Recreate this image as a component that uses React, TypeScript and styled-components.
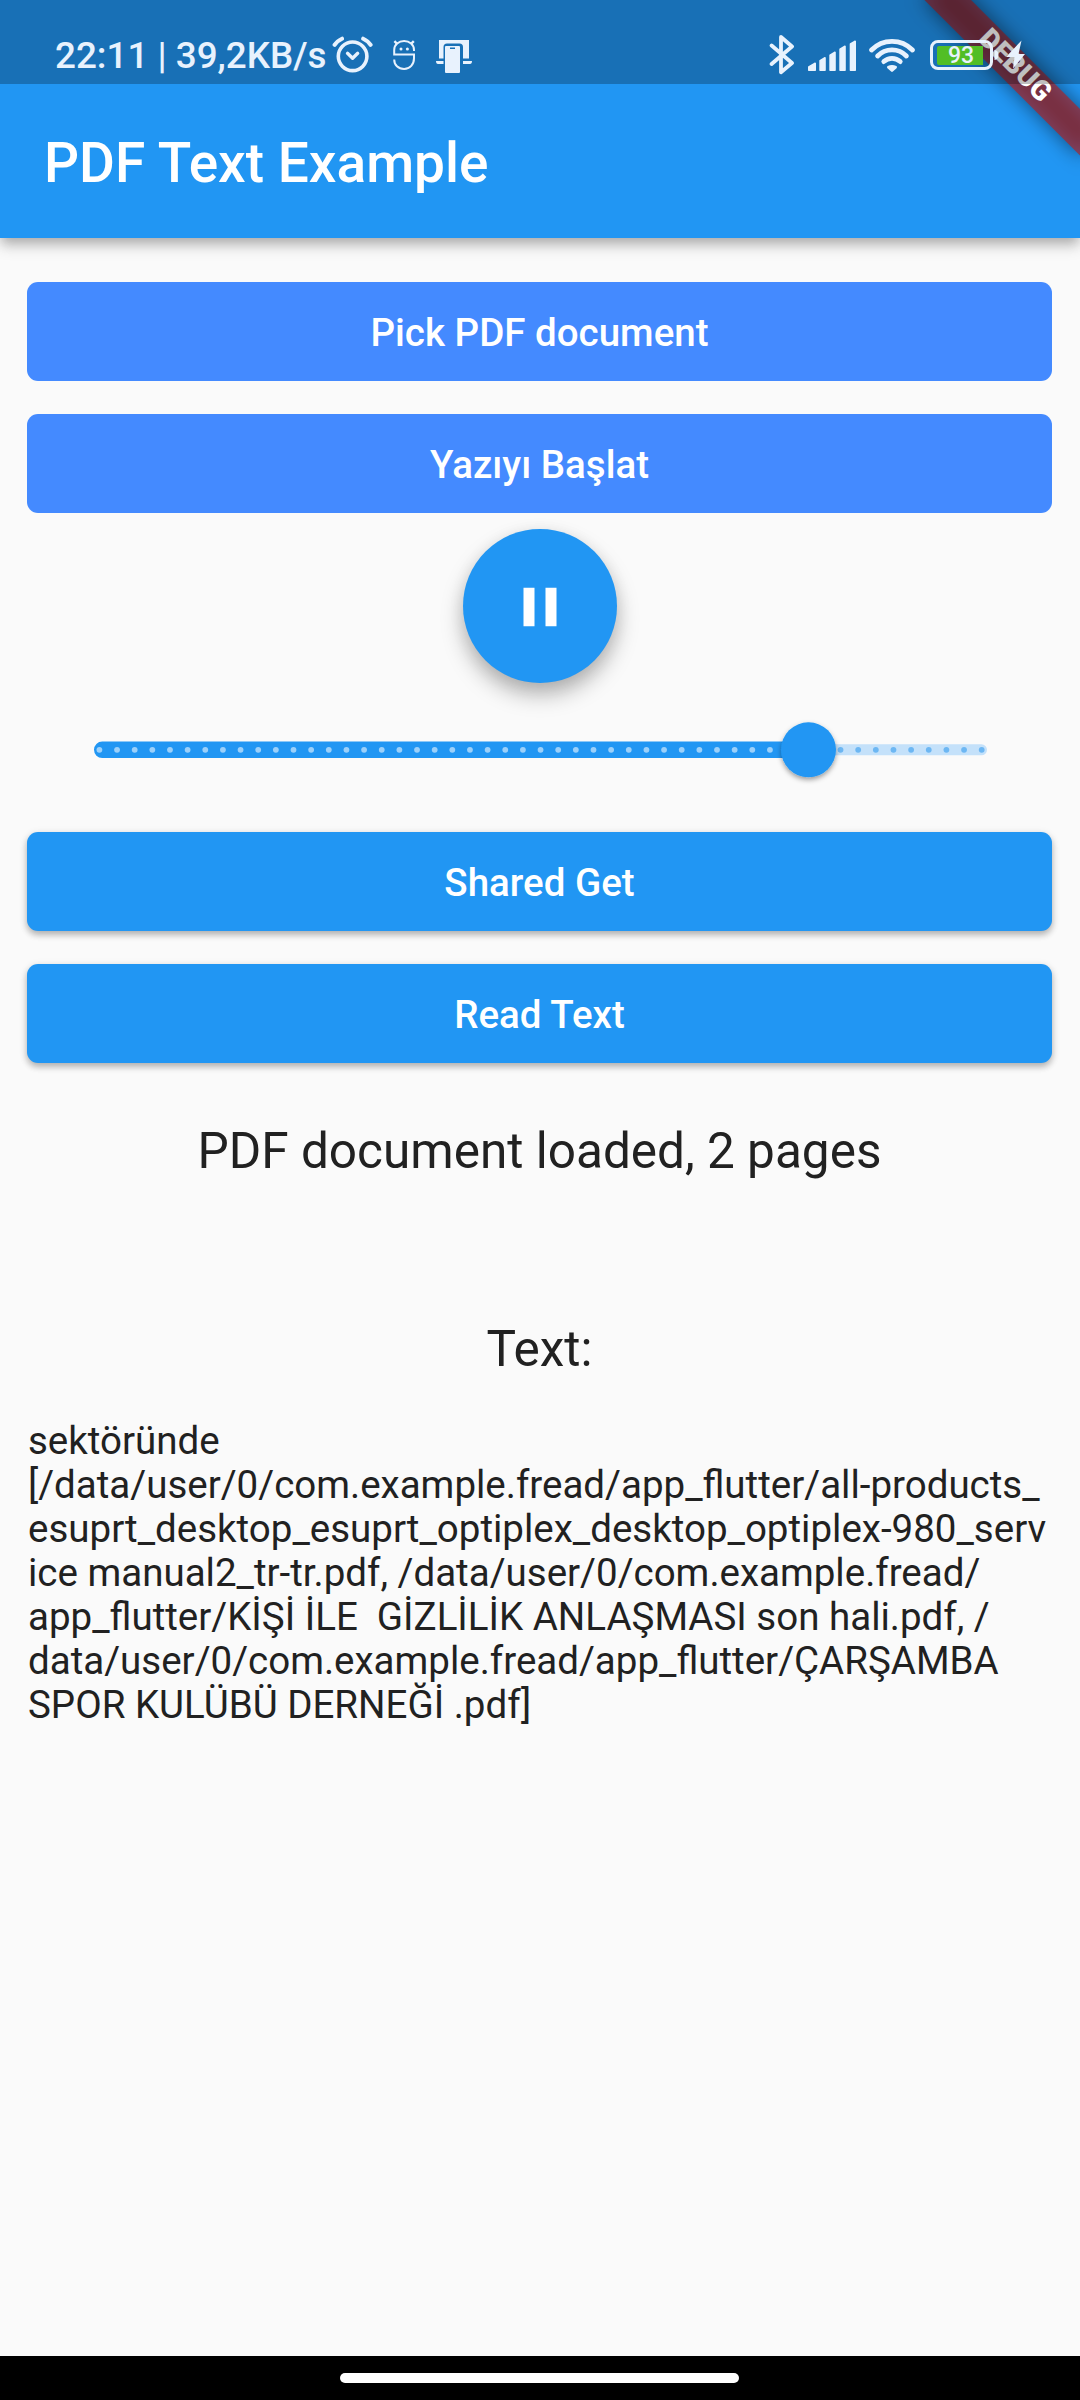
import React from "react";
import styled, { createGlobalStyle } from "styled-components";

const GlobalStyle = createGlobalStyle`
  html, body { margin: 0; padding: 0; background: #fafafa; }
  * { box-sizing: border-box; }
`;

const Screen = styled.div`
  position: relative;
  display: flex;
  flex-direction: column;
  width: 1080px;
  height: 2400px;
  overflow: hidden;
  background: #fafafa;
  color: #212121;
  font-family: Roboto, "Noto Sans", sans-serif;
`;

const AppBar = styled.header`
  display: flex;
  align-items: center;
  flex: none;
  height: 238px;
  padding: 87px 44px 0;
  background: #2196f3;
  box-shadow: 0 6px 11px -2px rgba(0, 0, 0, 0.22), 0 9px 14px rgba(0, 0, 0, 0.14);
`;

const Title = styled.h1`
  margin: 0;
  font-size: 55px;
  font-weight: 500;
  line-height: 66px;
  color: #fff;
  white-space: nowrap;
`;

const BannerAnchor = styled.div`
  position: absolute;
  top: 0;
  right: 0;
  width: 0;
  height: 0;
  transform: rotate(45deg);
`;

const BannerShadow = styled.div`
  position: absolute;
  left: -110px;
  top: 77px;
  width: 220px;
  height: 33px;
  background: rgba(0, 0, 0, 0.5);
  filter: blur(10px);
`;

const BannerRibbon = styled.div`
  position: absolute;
  left: -110px;
  top: 77px;
  display: flex;
  align-items: center;
  justify-content: center;
  width: 220px;
  height: 33px;
  padding: 0 0 3px 1px;
  background: rgba(183, 28, 28, 0.627);
  color: #fff;
  font-size: 28px;
  font-weight: 900;
  line-height: 28px;
`;

const StatusBar = styled.div`
  position: absolute;
  top: 0;
  left: 0;
  display: flex;
  justify-content: space-between;
  width: 1080px;
  height: 84px;
  padding: 34px 53px 0 55px;
  background: rgba(0, 0, 0, 0.25);
  color: #e8f2fd;
`;

const StatusGroup = styled.div`
  display: flex;
  align-items: flex-start;
`;

const StatusText = styled.span`
  width: 276px;
  font-size: 36.8px;
  font-weight: 500;
  line-height: 44px;
  white-space: pre;
`;

const Glyph = styled.svg<{ $gap?: number }>`
  display: block;
  flex: none;
  margin-left: ${(p) => p.$gap ?? 0}px;
`;

const Battery = styled.div`
  display: flex;
  align-items: center;
  width: 63px;
  height: 30px;
  margin: 6px 0 0 14px;
  padding: 0 3px;
  border: 3px solid currentColor;
  border-radius: 8px;
`;

const Charge = styled.div`
  display: flex;
  align-items: center;
  justify-content: center;
  width: 46px;
  height: 19px;
  margin-left: 1px;
  padding: 1px 0 0 2px;
  border-radius: 2px 0 0 2px;
  background: #52be26;
  font-size: 23px;
  font-weight: 500;
  line-height: 19px;
`;

const Content = styled.main`
  display: flex;
  flex: 1;
  flex-direction: column;
  align-items: stretch;
  padding: 44px 28px 0 27px;
`;

const Button = styled.button<{ $raised?: boolean; $after: number }>`
  flex: none;
  height: 99px;
  margin: 0 0 ${(p) => p.$after}px;
  padding: 2px 0 0;
  border: 0;
  border-radius: 11px;
  background: ${(p) => (p.$raised ? "#2196f3" : "#448aff")};
  box-shadow: ${(p) => (p.$raised ? "0 4px 6px rgba(0, 0, 0, 0.22), 0 2px 8px rgba(0, 0, 0, 0.12)" : "none")};
  color: #fff;
  font-family: inherit;
  font-size: 38.5px;
  font-weight: 500;
  line-height: 44px;
`;

const RoundButton = styled.button`
  display: flex;
  flex: none;
  align-self: center;
  align-items: center;
  justify-content: center;
  width: 154px;
  height: 154px;
  padding: 1px 0 0 1px;
  border: 0;
  border-radius: 50%;
  background: #2196f3;
  box-shadow: 0 12px 22px rgba(0, 0, 0, 0.27), 0 4px 16px rgba(0, 0, 0, 0.08);
`;

const SliderRow = styled.div`
  display: flex;
  flex: none;
  height: 132px;
  margin: 1px 0 16px;
`;

const Caption = styled.p<{ $before?: number }>`
  margin: ${(p) => p.$before ?? 0}px 0 0;
  font-size: 49.5px;
  line-height: 58px;
  text-align: center;
`;

const Paragraph = styled.p`
  margin: 41px 0 0 1px;
  font-size: 38.5px;
  line-height: 44px;
  white-space: pre;
`;

const NavBar = styled.footer`
  display: flex;
  flex: none;
  justify-content: center;
  height: 44px;
  padding: 17px 1px 0 0;
  background: #000;
`;

const Handle = styled.div`
  width: 399px;
  height: 10px;
  border-radius: 5px;
  background: #fff;
`;

const LINES = [
  "sektöründe",
  "[/data/user/0/com.example.fread/app_flutter/all-products_",
  "esuprt_desktop_esuprt_optiplex_desktop_optiplex-980_serv",
  "ice manual2_tr-tr.pdf, /data/user/0/com.example.fread/",
  "app_flutter/KİŞİ İLE  GİZLİLİK ANLAŞMASI son hali.pdf, /",
  "data/user/0/com.example.fread/app_flutter/ÇARŞAMBA",
  "SPOR KULÜBÜ DERNEĞİ .pdf]",
];

function AlarmIcon() {
  return (
    <Glyph width="42" height="42" viewBox="331 34 42 42" fill="none" stroke="currentColor" strokeWidth="3.6" strokeLinecap="round" strokeLinejoin="round">
      <circle cx="352.6" cy="56.3" r="14.3" />
      <path d="M347.5 53.3l5.100 5 5.100-5" strokeWidth="3.3" />
      <path d="M334.6 44.9Q337 41 342 38.7M370.6 44.9Q368.2 41 363.2 38.7" strokeWidth="4" />
    </Glyph>
  );
}

function DroidIcon() {
  return (
    <Glyph $gap={19} width="24" height="42" viewBox="392 34 24 42" fill="none" stroke="currentColor" strokeWidth="2">
      <path d="M414 51v-1.100a9.8 8.800 0 0 0-19.8 0v4.700H414v3.600c0 6-4 10.8-9.9 10.8s-9.9-4-9.9-9.5" />
      <path d="M394.400 41.200l3 3M413.800 41.200l-3 3" strokeWidth="2.400" />
      <circle cx="401" cy="49" r="1.500" fill="currentColor" stroke="none" />
      <circle cx="407.400" cy="49" r="1.500" fill="currentColor" stroke="none" />
    </Glyph>
  );
}

function DeviceIcon() {
  return (
    <Glyph $gap={20} width="37" height="42" viewBox="436 34 37 42" fill="currentColor">
      <path d="M439 40h30v18.5h-6V47q0-3.500-3.500-3.500H447q-3.500 0-3.500 3.500v11.500H439z" />
      <path d="M436 61h7.500v3H438q-2 0-2-3zM463 61h9q0 3-2 3h-7z" />
      <path fillRule="evenodd" d="M446 46h13q1 0 1 1v25q0 1-1 1h-13q-1 0-1-1V47q0-1 1-1zM450 47.600v1.400h5v-1.400z" />
    </Glyph>
  );
}

function BluetoothIcon() {
  return (
    <Glyph width="26" height="42" viewBox="769 34 26 42" fill="none" stroke="currentColor" strokeWidth="3.8" strokeLinecap="round" strokeLinejoin="round">
      <path d="M771.600 45.500L792 63 781 72.200V37l11 9.500-20.400 17.500" />
    </Glyph>
  );
}

function SignalIcon() {
  const bars = [
    [808, 8, 62.5],
    [819.3, 6.5, 57],
    [829.3, 6.5, 51.5],
    [839.3, 6.5, 45.5],
    [849.7, 6.3, 40.5],
  ];
  return (
    <Glyph $gap={12} width="50" height="42" viewBox="807 34 50 42" fill="currentColor" stroke="currentColor" strokeWidth="1.6" strokeLinejoin="round">
      {bars.map(([x, w, y]) => (
        <path key={x} d={`M${x + 0.8} ${y + w * 0.55}L${x + w - 0.8} ${y + 0.8}V70.200H${x + 0.8}z`} />
      ))}
    </Glyph>
  );
}

function WifiIcon() {
  return (
    <Glyph $gap={11} width="48" height="42" viewBox="868 34 48 42" fill="none" stroke="currentColor" strokeWidth="4.800" strokeLinecap="round">
      <path d="M871.500 50a28.500 28.500 0 0 1 41 0" />
      <path d="M877.600 56a20 20 0 0 1 28.800 0" />
      <path d="M883.800 61.600a12 12 0 0 1 16.400 0" />
      <path d="M888.300 67.200q3.700-2 7.400 0l-3.700 3.400z" strokeWidth="2.600" fill="currentColor" strokeLinejoin="round" />
    </Glyph>
  );
}

function ChargingIcon() {
  return (
    <Glyph width="34" height="42" viewBox="993 34 34 42" fill="currentColor">
      <path d="M994.500 50q4 .5 4 5t-4 5z" />
      <path d="M1021.500 40.500l-15.500 16.500h8.500l-1.500 11.500 12-14.500h-6.500z" />
    </Glyph>
  );
}

const FIRST_TICK = 99.4;
const TICK_STEP = 17.646;
const THUMB_X = 808.5;

function Slider() {
  const ticks = Array.from({ length: 51 }, (_, i) => FIRST_TICK + i * TICK_STEP);
  return (
    <SliderRow>
      <svg width="1025" height="132" viewBox="27 684.2 1025 132">
        <defs>
          <filter id="thumbShadow" x="-30%" y="-30%" width="160%" height="160%">
            <feDropShadow dx="0" dy="2.500" stdDeviation="2.400" floodColor="#000" floodOpacity="0.38" />
          </filter>
        </defs>
        <path d={`M${THUMB_X} 744.500H981.500a5.500 5.500 0 0 1 0 11H${THUMB_X}z`} fill="#c4e1fa" />
        <path d={`M${THUMB_X} 741.750H102.250a8.250 8.250 0 0 0 0 16.500H${THUMB_X}z`} fill="#2196f3" />
        {ticks.map((x) => (
          <circle key={x} cx={x} cy="750" r="2.900" fill={x < THUMB_X ? "#9bd0fa" : "#6db7f3"} />
        ))}
        <circle cx={THUMB_X} cy="750" r="27.500" fill="#2196f3" filter="url(#thumbShadow)" />
      </svg>
    </SliderRow>
  );
}

export default function App() {
  return (
    <>
      <GlobalStyle />
      <Screen>
        <AppBar>
          <Title>PDF Text Example</Title>
        </AppBar>
        <Content>
          <Button $after={33}>Pick PDF document</Button>
          <Button $after={16}>Yazıyı Başlat</Button>
          <RoundButton aria-label="Pause">
            <svg width="66" height="66" viewBox="0 0 24 24" fill="#fff">
              <path d="M6 19h4V5H6v14zm8-14v14h4V5h-4z" />
            </svg>
          </RoundButton>
          <Slider />
          <Button $raised $after={33}>Shared Get</Button>
          <Button $raised $after={59}>Read Text</Button>
          <Caption>PDF document loaded, 2 pages</Caption>
          <Caption $before={140}>Text:</Caption>
          <Paragraph>{LINES.join("\n")}</Paragraph>
        </Content>
        <NavBar>
          <Handle />
        </NavBar>
        <BannerAnchor>
          <BannerShadow />
          <BannerRibbon>DEBUG</BannerRibbon>
        </BannerAnchor>
        <StatusBar>
          <StatusGroup>
            <StatusText>22:11 | 39,2KB/s</StatusText>
            <AlarmIcon />
            <DroidIcon />
            <DeviceIcon />
          </StatusGroup>
          <StatusGroup>
            <BluetoothIcon />
            <SignalIcon />
            <WifiIcon />
            <Battery>
              <Charge>93</Charge>
            </Battery>
            <ChargingIcon />
          </StatusGroup>
        </StatusBar>
      </Screen>
    </>
  );
}
